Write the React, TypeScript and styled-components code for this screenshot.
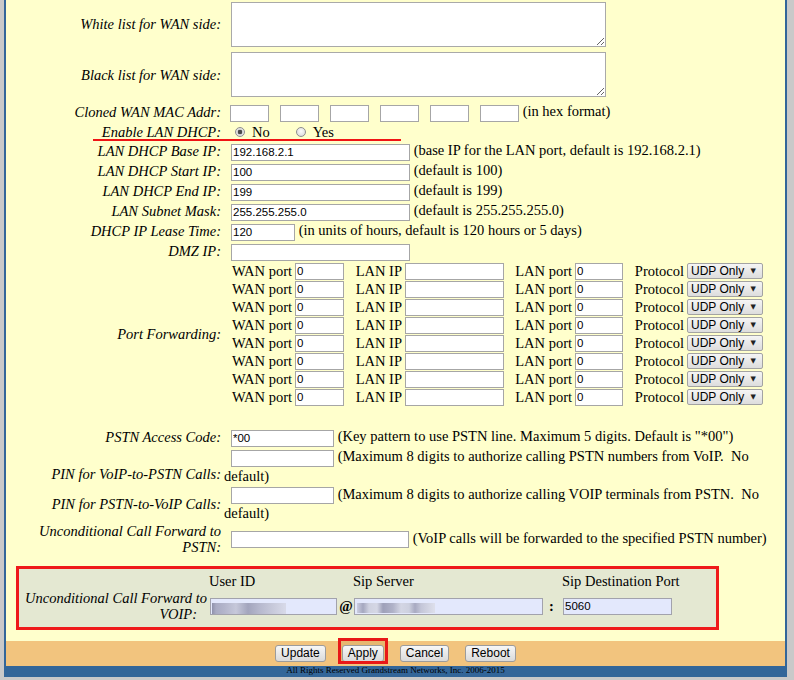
import React from "react";
import styled, { createGlobalStyle } from "styled-components";

const GlobalStyle = createGlobalStyle`
  html, body { margin: 0; padding: 0; background: #c9c9c9; }
  body {
    font-family: "Liberation Serif", "Times New Roman", serif;
    font-size: 14.5px;
    color: #000;
  }
`;

const Frame = styled.div`
  margin-left: 4px;
  width: 779px;
  padding: 0 2px;
  background: #336699;
`;

const Main = styled.div`
  background: #ffffcc;
  padding-bottom: 11px;
`;

const Row = styled.div<{ $h: number; $mark?: boolean }>`
  position: relative;
  display: grid;
  grid-template-columns: 216px 1fr;
  column-gap: 2px;
  height: ${(p) => p.$h}px;
  align-items: center;
  ${(p) =>
    p.$mark &&
    `&::after {
      content: "";
      position: absolute;
      left: 87px;
      bottom: 0;
      width: 308px;
      height: 2px;
      background: #f01414;
    }`}
`;

const Label = styled.div<{ $end?: boolean }>`
  font-style: italic;
  text-align: right;
  line-height: 16px;
  padding-right: 1px;
  white-space: nowrap;
  align-self: ${(p) => (p.$end ? "end" : "center")};
  padding-bottom: ${(p) => (p.$end ? "3px" : "0")};
`;

const Value = styled.div`
  line-height: 18px;
  padding-right: 4px;
`;

const Area = styled.textarea`
  display: block;
  box-sizing: border-box;
  width: 375px;
  height: 45px;
  margin: 0 0 0 7px;
  border: 1px solid #a9a9a9;
  background: #fff;
  font: 12px "Liberation Sans", Arial, sans-serif;
  outline: none;
`;

const TextInput = styled.input<{ $w: number; $ml?: number }>`
  box-sizing: border-box;
  width: ${(p) => p.$w}px;
  height: 17px;
  margin: 0 0 0 ${(p) => p.$ml ?? 0}px;
  padding: 0 1px;
  border: 1px solid #a6a6a6;
  background: #fff;
  font: 11.5px "Liberation Sans", Arial, sans-serif;
  color: #000;
  vertical-align: middle;
  outline: none;
`;

const HexInput = styled(TextInput)`
  margin-left: 11px;
  &:first-child {
    margin-left: 6px;
  }
`;

const RadioLabel = styled.label`
  display: inline-flex;
  align-items: center;
  line-height: 18px;
`;

const Radio = styled.input.attrs({ type: "radio" })<{ $ml: number }>`
  appearance: none;
  box-sizing: border-box;
  width: 10px;
  height: 10px;
  margin: 0 7px 0 ${(p) => p.$ml}px;
  border: 1px solid #8e8e8e;
  border-radius: 50%;
  background: radial-gradient(circle at 50% 40%, #fbfbfb, #d4d4d4);
  &:checked {
    background: radial-gradient(circle, #4a4a4a 0 2px, #dadada 2.6px, #eeeeee);
  }
`;

const PFGrid = styled.div`
  display: grid;
  grid-template-columns: 64px 49px 61px 99px 71px 48px 64px 76px;
  grid-auto-rows: 18px;
  align-items: center;
  padding-left: 7px;
`;

const PFText = styled.span`
  text-align: right;
  padding-right: 3px;
  white-space: nowrap;
  line-height: 18px;
`;

const SelectWrap = styled.span`
  position: relative;
  display: inline-block;
  width: 76px;
  height: 16px;
  &::after {
    content: "▼";
    position: absolute;
    right: 7px;
    top: 4px;
    font: 7px "DejaVu Sans", sans-serif;
    line-height: 8px;
    color: #222;
    pointer-events: none;
  }
`;

const Select = styled.select`
  appearance: none;
  box-sizing: border-box;
  display: block;
  width: 76px;
  height: 16px;
  margin: 0;
  padding: 0 0 0 3px;
  border: 1px solid #a3a3a3;
  border-radius: 2px;
  background: linear-gradient(#f5f5f5, #dddddd);
  font: 12px "Liberation Sans", Arial, sans-serif;
  line-height: 14px;
  color: #000;
  outline: none;
`;

const VoipBox = styled.div`
  margin: 10px 0 0 10px;
  width: 703px;
  box-sizing: border-box;
  border: 3px solid #ef1a1a;
  background: #e4e8d2;
  display: grid;
  grid-template-columns: 191px 128px 16px 190px 19px 1fr;
  grid-template-rows: 21px 32px;
  align-items: center;
  padding-bottom: 5px;
`;

const ColHead = styled.span`
  align-self: end;
  line-height: 18px;
  white-space: nowrap;
  margin-left: -1px;
`;

const VoipLabel = styled.div`
  font-style: italic;
  text-align: right;
  line-height: 16px;
  padding-right: 3px;
  white-space: nowrap;
`;

const Indent = styled.span`
  padding-right: 10px;
`;

const Sep = styled.span<{ $center?: boolean }>`
  font-weight: bold;
  text-align: ${(p) => (p.$center ? "center" : "left")};
  padding-left: ${(p) => (p.$center ? "0" : "5px")};
`;

const FieldInput = styled(TextInput)<{ $blur?: string }>`
  background: ${(p) => (p.$blur ? `${p.$blur}, ` : "")}#e3e8fc;
  border-color: #a2a2ac;
`;

const userBlur =
  "linear-gradient(90deg, #8f91ab 0px, #a9abc3 4px, #b3b5cb 12px, #c6c8da 24px, #a3a5bd 36px, #b7b9ce 48px, #c9cbdc 62px, #d7d9e8 73px) no-repeat 1px 4px / 74px 11px";
const serverBlur =
  "linear-gradient(90deg, #cbcde0 0px, #a5a7bf 6px, #cfd1e0 12px, #d5d7e5 20px, #9ea0b9 26px, #b0b2c8 36px, #d4d6e4 44px, #cdd0df 52px, #a8aac2 58px, #c4c6d8 64px, #dcdeea 77px) no-repeat 2px 4px / 78px 10px";

const ButtonBar = styled.div`
  background: #f2c47e;
  height: 25px;
  display: flex;
  justify-content: center;
  align-items: center;
  gap: 16px;
`;

const Btn = styled.button`
  box-sizing: border-box;
  height: 17px;
  margin: 0;
  padding: 0 5px;
  border: 1px solid #9c9c9c;
  border-radius: 3px;
  background: linear-gradient(#f7f7f7, #dadada);
  font: 12px "Liberation Sans", Arial, sans-serif;
  line-height: 15px;
  color: #000;
`;

const Highlight = styled.span`
  position: relative;
  z-index: 0;
  display: inline-flex;
  &::before {
    content: "";
    position: absolute;
    inset: -4px -1px 1px -1px;
    background: rgba(150, 90, 20, 0.12);
    z-index: -1;
  }
  &::after {
    content: "";
    position: absolute;
    inset: -7px -4px -2px -4px;
    border: 3px solid #e81818;
    pointer-events: none;
  }
`;

const Footer = styled.div`
  height: 11px;
  overflow: hidden;
  text-align: center;
  font-size: 9px;
  line-height: 9px;
  color: #000;
`;

const Spacer = styled.div``;

const pfRows = Array.from({ length: 8 }, (_, i) => i);

export default function App() {
  return (
    <>
      <GlobalStyle />
      <Frame>
        <Main>
          <Row $h={48}>
            <Label>White list for WAN side:</Label>
            <Value>
              <Area />
            </Value>
          </Row>
          <Row $h={53}>
            <Label>Black list for WAN side:</Label>
            <Value>
              <Area />
            </Value>
          </Row>
          <Row $h={22}>
            <Label>Cloned WAN MAC Addr:</Label>
            <Value>
              <span>
                <HexInput $w={39} />
                <HexInput $w={39} />
                <HexInput $w={39} />
                <HexInput $w={39} />
                <HexInput $w={39} />
                <HexInput $w={39} />
              </span>{" "}
              (in hex format)
            </Value>
          </Row>
          <Row $h={18} $mark>
            <Label>Enable LAN DHCP:</Label>
            <Value>
              <RadioLabel>
                <Radio name="dhcp" $ml={11} defaultChecked />
                No
              </RadioLabel>
              <RadioLabel>
                <Radio name="dhcp" $ml={26} />
                Yes
              </RadioLabel>
            </Value>
          </Row>
          <Row $h={20}>
            <Label>LAN DHCP Base IP:</Label>
            <Value>
              <TextInput $w={179} $ml={7} defaultValue="192.168.2.1" /> (base IP for the LAN port, default is 192.168.2.1)
            </Value>
          </Row>
          <Row $h={20}>
            <Label>LAN DHCP Start IP:</Label>
            <Value>
              <TextInput $w={179} $ml={7} defaultValue="100" /> (default is 100)
            </Value>
          </Row>
          <Row $h={20}>
            <Label>LAN DHCP End IP:</Label>
            <Value>
              <TextInput $w={179} $ml={7} defaultValue="199" /> (default is 199)
            </Value>
          </Row>
          <Row $h={20}>
            <Label>LAN Subnet Mask:</Label>
            <Value>
              <TextInput $w={179} $ml={7} defaultValue="255.255.255.0" /> (default is 255.255.255.0)
            </Value>
          </Row>
          <Row $h={20}>
            <Label>DHCP IP Lease Time:</Label>
            <Value>
              <TextInput $w={64} $ml={7} defaultValue="120" /> (in units of hours, default is 120 hours or 5 days)
            </Value>
          </Row>
          <Row $h={20}>
            <Label>DMZ IP:</Label>
            <Value>
              <TextInput $w={179} $ml={7} />
            </Value>
          </Row>
          <Row $h={146}>
            <Label>Port Forwarding:</Label>
            <PFGrid>
              {pfRows.map((i) => (
                <React.Fragment key={i}>
                  <PFText>WAN port</PFText>
                  <TextInput $w={49} defaultValue="0" />
                  <PFText>LAN IP</PFText>
                  <TextInput $w={99} />
                  <PFText>LAN port</PFText>
                  <TextInput $w={48} defaultValue="0" />
                  <PFText>Protocol</PFText>
                  <SelectWrap>
                    <Select defaultValue="udp">
                      <option value="udp">UDP Only</option>
                      <option value="tcp">TCP Only</option>
                      <option value="both">TCP/UDP</option>
                    </Select>
                  </SelectWrap>
                </React.Fragment>
              ))}
            </PFGrid>
          </Row>
          <Row $h={20}>
            <Spacer />
            <Spacer />
          </Row>
          <Row $h={20}>
            <Label>PSTN Access Code:</Label>
            <Value>
              <TextInput $w={103} $ml={7} defaultValue="*00" /> (Key pattern to use PSTN line. Maximum 5 digits. Default is "*00")
            </Value>
          </Row>
          <Row $h={38}>
            <Label $end>PIN for VoIP-to-PSTN Calls:</Label>
            <Value>
              <TextInput $w={103} $ml={7} /> (Maximum 8 digits to authorize calling PSTN numbers from VoIP.&nbsp; No
              default)
            </Value>
          </Row>
          <Row $h={36}>
            <Label>PIN for PSTN-to-VoIP Calls:</Label>
            <Value>
              <TextInput $w={103} $ml={7} /> (Maximum 8 digits to authorize calling VOIP terminals from PSTN.&nbsp; No
              default)
            </Value>
          </Row>
          <Row $h={35}>
            <Label>
              Unconditional Call Forward to
              <br />
              PSTN:
            </Label>
            <Value>
              <TextInput $w={178} $ml={7} /> (VoIP calls will be forwarded to the specified PSTN number)
            </Value>
          </Row>
          <VoipBox>
            <span />
            <ColHead>User ID</ColHead>
            <span />
            <ColHead>Sip Server</ColHead>
            <span />
            <ColHead>Sip Destination Port</ColHead>
            <VoipLabel>
              Unconditional Call Forward to
              <br />
              <Indent>VOIP:</Indent>
            </VoipLabel>
            <FieldInput $w={127} $blur={userBlur} />
            <Sep $center>@</Sep>
            <FieldInput $w={189} $blur={serverBlur} />
            <Sep>:</Sep>
            <FieldInput $w={109} defaultValue="5060" />
          </VoipBox>
        </Main>
        <ButtonBar>
          <Btn>Update</Btn>
          <Highlight>
            <Btn>Apply</Btn>
          </Highlight>
          <Btn>Cancel</Btn>
          <Btn>Reboot</Btn>
        </ButtonBar>
        <Footer>All Rights Reserved Grandstream Networks, Inc. 2006-2015</Footer>
      </Frame>
    </>
  );
}
